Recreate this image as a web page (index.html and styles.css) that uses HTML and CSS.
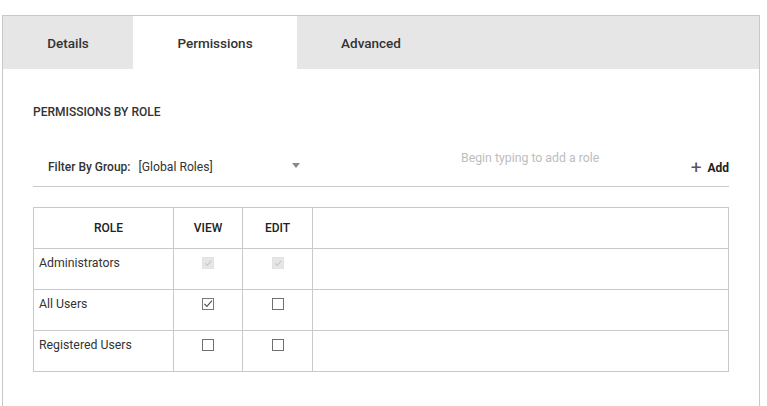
FILE: index.html
```html
<!DOCTYPE html>
<html>
<head>
<meta charset="utf-8">
<link rel="stylesheet" href="styles.css">
</head>
<body>
<div class="panel">
  <div class="tabs">
    <div class="tab tab-details">Details</div>
    <div class="tab tab-perm active">Permissions</div>
    <div class="tab tab-adv">Advanced</div>
  </div>
  <div class="content">
    <h2 class="heading">PERMISSIONS BY ROLE</h2>
    <div class="filter-row">
      <div class="select">
        <span class="select-label">Filter By Group:</span>
        <span class="select-value">[Global Roles]</span>
        <span class="caret"></span>
      </div>
      <div class="role-input">Begin typing to add a role</div>
      <div class="add-btn"><span class="plus">+</span><span class="add-text">Add</span></div>
    </div>
    <table class="roles">
      <thead>
        <tr>
          <th class="c-role">ROLE</th>
          <th class="c-view">VIEW</th>
          <th class="c-edit">EDIT</th>
          <th class="c-rest"></th>
        </tr>
      </thead>
      <tbody>
        <tr>
          <td class="name">Administrators</td>
          <td class="box-cell"><span class="cb disabled"><svg viewBox="0 0 12 12"><path d="M3 6.3 L5.2 8.4 L9.2 3.8" /></svg></span></td>
          <td class="box-cell"><span class="cb disabled"><svg viewBox="0 0 12 12"><path d="M3 6.3 L5.2 8.4 L9.2 3.8" /></svg></span></td>
          <td></td>
        </tr>
        <tr>
          <td class="name">All Users</td>
          <td class="box-cell"><span class="cb checked"><svg viewBox="0 0 12 12"><path d="M2.4 5.8 L4.9 8.4 L10 2.6" /></svg></span></td>
          <td class="box-cell"><span class="cb"></span></td>
          <td></td>
        </tr>
        <tr>
          <td class="name">Registered Users</td>
          <td class="box-cell"><span class="cb"></span></td>
          <td class="box-cell"><span class="cb"></span></td>
          <td></td>
        </tr>
      </tbody>
    </table>
  </div>
</div>
</body>
</html>
```
FILE: styles.css
```css
html, body {
  margin: 0;
  padding: 0;
  background: #ffffff;
}
body {
  font-family: Roboto, "Liberation Sans", Arial, sans-serif;
  color: #333333;
}
.panel {
  margin: 15px 0 0 2px;
  width: 756px;
  height: 400px;
  border: 1px solid #c9c9c9;
  border-bottom: none;
}
.tabs {
  display: flex;
  height: 53px;
  background: #e6e6e6;
}
.tab {
  font-size: 13.5px;
  font-weight: 500;
  line-height: 55px;
  text-align: center;
  color: #333333;
}
.tab-details { width: 130px; }
.tab-perm { width: 164px; }
.tab-adv { width: 148px; }
.tab.active { background: #ffffff; }
.content {
  padding: 0 30px;
}
.heading {
  margin: 35px 0 0 0;
  font-size: 12px;
  font-weight: 500;
  line-height: 16px;
  color: #333333;
  letter-spacing: 0;
}
.filter-row {
  margin-top: 21px;
  height: 45px;
  border-bottom: 1px solid #c9c9c9;
  display: flex;
  align-items: flex-start;
}
.select {
  margin: 16px 0 0 15px;
  width: 252px;
  display: flex;
  align-items: center;
  height: 20px;
  font-size: 12px;
}
.select-label {
  font-weight: 500;
  color: #333333;
}
.select-value {
  margin-left: 8px;
  color: #333333;
  font-size: 12.2px;
}
.caret {
  margin-left: auto;
  width: 0;
  height: 0;
  border-left: 4.5px solid transparent;
  border-right: 4.5px solid transparent;
  border-top: 5px solid #888888;
  margin-top: -4px;
}
.role-input {
  margin: 7px 0 0 161px;
  font-size: 12.3px;
  line-height: 20px;
  color: #bdbdbd;
  width: 226px;
}
.add-btn {
  margin: 17px 0 0 auto;
  display: flex;
  align-items: center;
  height: 20px;
}
.plus {
  font-size: 19px;
  font-weight: 400;
  color: #555555;
  line-height: 20px;
}
.add-text {
  margin-left: 6px;
  font-size: 12px;
  font-weight: 700;
  color: #222222;
}
.roles {
  margin-top: 20px;
  width: 696px;
  border-collapse: collapse;
  font-size: 12.3px;
}
.roles th, .roles td {
  border: 1px solid #c9c9c9;
  padding: 0;
}
.roles th {
  height: 40px;
  font-size: 12px;
  font-weight: 500;
  color: #222222;
  text-align: center;
  vertical-align: middle;
}
.roles th.c-role {
  padding-left: 10px;
  width: 129px;
}
.c-view { width: 68px; }
.c-edit { width: 69px; }
.roles td {
  height: 40px;
  vertical-align: top;
}
.roles td.name {
  padding: 6px 0 0 5px;
  height: 34px;
  line-height: 16px;
  color: #333333;
}
.box-cell {
  text-align: center;
}
.cb {
  display: inline-block;
  box-sizing: border-box;
  width: 12px;
  height: 12px;
  margin-top: 8px;
  border: 1px solid #707070;
  background: #ffffff;
  vertical-align: top;
  position: relative;
}
.cb svg {
  position: absolute;
  left: -1px;
  top: -1px;
  width: 12px;
  height: 12px;
}
.cb svg path {
  fill: none;
  stroke-width: 1.2;
}
.cb.checked {
  border-color: #777777;
}
.cb.checked svg path {
  stroke: #555555;
}
.cb.disabled {
  border: 1px solid #e2e2e2;
  background: #e6e6e6;
}
.cb.disabled svg path {
  stroke: #c9c9c9;
}
```
